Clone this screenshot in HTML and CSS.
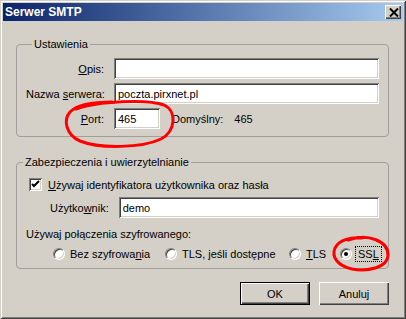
FILE: index.html
```html
<!DOCTYPE html>
<html lang="pl">
<head>
<meta charset="utf-8">
<title>Serwer SMTP</title>
<link rel="stylesheet" href="styles.css">
</head>
<body>
<div class="window">
  <div class="titlebar">
    <span class="title">Serwer SMTP</span>
    <span class="close"><svg width="10" height="9" viewBox="0 0 10 9"><path d="M1 0.5 L9 8.5 M9 0.5 L1 8.5" stroke="#000" stroke-width="2" fill="none"/></svg></span>
  </div>
  <div class="content">
    <fieldset class="group g1">
      <legend>Ustawienia</legend>
      <div class="form-grid">
        <span class="lbl"><u>O</u>pis:</span>
        <span class="input"></span>
        <span class="lbl">Nazwa <u>s</u>erwera:</span>
        <span class="input">poczta.pirxnet.pl</span>
        <span class="lbl"><u>P</u>ort:</span>
        <div class="port-row">
          <span class="input port">465</span>
          <span class="def">Domyślny:</span>
          <span class="defval">465</span>
        </div>
      </div>
    </fieldset>
    <fieldset class="group g2">
      <legend>Zabezpieczenia i uwierzytelnianie</legend>
      <div class="check-row">
        <span class="checkbox"><svg width="9" height="9" viewBox="0 0 9 9"><path d="M1 4 L3 6 L8 1" stroke="#000" stroke-width="2" fill="none"/></svg></span>
        <span><u>U</u>żywaj identyfikatora użytkownika oraz hasła</span>
      </div>
      <div class="user-row">
        <span class="lbl">Użytko<u>w</u>nik:</span>
        <span class="input user">demo</span>
      </div>
      <div class="enc-label">Używaj połączenia szyfrowanego:</div>
      <div class="radios">
        <span class="radio-item r1"><span class="radio"></span><span>Bez szyfrowa<u>n</u>ia</span></span>
        <span class="radio-item r2"><span class="radio"></span><span>TLS, <u>j</u>eśli dostępne</span></span>
        <span class="radio-item r3"><span class="radio"></span><span><u>T</u>LS</span></span>
        <span class="radio-item"><span class="radio checked"></span><span class="focus">SS<u>L</u></span></span>
      </div>
    </fieldset>
    <div class="buttons">
      <span class="btn default">OK</span>
      <span class="btn">Anuluj</span>
    </div>
  </div>
  <svg class="marks" width="406" height="319" viewBox="0 0 406 319">
    <path d="M76 109 C 98 101, 148 99, 164 105 C 177 111, 176 131, 161 139 C 142 148, 100 149, 80 141 C 66 135, 63 120, 70 112 C 78 104, 96 102, 112 102" stroke="#f00" stroke-width="3" fill="none" stroke-linecap="round"/>
    <path d="M348 240 C 368 233, 389 241, 388 256 C 387 267, 369 272, 352 269 C 338 266, 331 257, 335 248 C 339 240, 350 237, 362 238" stroke="#f00" stroke-width="3" fill="none" stroke-linecap="round"/>
  </svg>
</div>
</body>
</html>
```
FILE: styles.css
```css
* { box-sizing: border-box; }
html, body { margin: 0; padding: 0; background: #d4d0c8; }
body {
  font-family: "Liberation Sans", Arial, sans-serif;
  font-size: 11px;
  color: #000;
}
u { text-decoration: underline; text-underline-offset: 1px; }

.window {
  position: relative;
  width: 406px;
  height: 319px;
  padding: 3px;
  background: #d4d0c8;
  box-shadow: inset 1px 1px #d4d0c8, inset -1px -1px #404040, inset 2px 2px #fff, inset -2px -2px #808080;
  display: flex;
  flex-direction: column;
}

.titlebar {
  height: 18px;
  background: linear-gradient(to right, #0a246a, #a6caf0);
  display: flex;
  align-items: center;
  justify-content: space-between;
  padding: 0 2px 0 2px;
}
.title {
  color: #fff;
  font-weight: bold;
  font-size: 12px;
}
.close {
  width: 16px;
  height: 14px;
  background: #d4d0c8;
  box-shadow: inset 1px 1px #fff, inset -1px -1px #404040, inset -2px -2px #808080;
  display: flex;
  align-items: center;
  justify-content: center;
  padding-left: 1px;
}
.close svg { display: block; }

.content {
  padding: 17px 14px 0 13px;
  display: flex;
  flex-direction: column;
}

.group {
  margin: 0;
  border: 1px solid #a09f9a;
  border-radius: 4px;
  padding: 0;
  min-width: 0;
}
.group legend {
  margin-left: 6px;
  padding: 0 2px;
  line-height: 13px;
}
.g1 { padding: 7px 9px 7px 9px; }
.g2 { margin-top: 19px; padding: 8px 9px 7px 0; }

.form-grid {
  display: grid;
  grid-template-columns: 78px 1fr;
  column-gap: 10px;
  row-gap: 4px;
  align-items: center;
}
.lbl { text-align: right; white-space: nowrap; }

.input {
  display: flex;
  align-items: center;
  height: 21px;
  background: #fff;
  padding: 0 4px;
  box-shadow: inset 1px 1px #808080, inset -1px -1px #fff, inset 2px 2px #404040, inset -2px -2px #d4d0c8;
  white-space: nowrap;
}
.port-row { display: flex; align-items: center; }
.input.port { width: 46px; }
.def { margin-left: 12px; }
.defval { margin-left: 11px; }

.check-row {
  display: flex;
  align-items: center;
  height: 15px;
  padding-left: 12px;
  gap: 6px;
}
.checkbox {
  width: 13px;
  height: 13px;
  background: #fff;
  box-shadow: inset 1px 1px #808080, inset -1px -1px #fff, inset 2px 2px #404040, inset -2px -2px #d4d0c8;
  display: flex;
  align-items: center;
  justify-content: center;
}
.checkbox svg { display: block; }

.user-row {
  display: flex;
  align-items: center;
  margin-top: 5px;
  padding-left: 33px;
  gap: 10px;
}
.input.user { flex: 1; }

.enc-label {
  margin-top: 10px;
  padding-left: 9px;
  line-height: 13px;
}

.radios {
  display: flex;
  align-items: center;
  margin-top: 6px;
  padding-left: 36px;
  height: 14px;
}
.radio-item { display: flex; align-items: center; gap: 5px; white-space: nowrap; flex: none; }
.r1 { width: 112px; }
.r2 { width: 124px; }
.r3 { width: 51px; }
.radio {
  width: 12px;
  height: 12px;
  border-radius: 50%;
  background: #fff;
  border: 1px solid;
  border-color: #808080 #fff #fff #808080;
  box-shadow: inset 1px 1px #404040, inset -1px -1px #d4d0c8;
  position: relative;
  flex: none;
}
.radio.checked::after {
  content: "";
  position: absolute;
  left: 3px;
  top: 3px;
  width: 4px;
  height: 4px;
  border-radius: 50%;
  background: #000;
}
.focus { outline: 1px dotted #000; outline-offset: 1px; padding: 0 1px; }

.buttons {
  display: flex;
  justify-content: flex-end;
  gap: 9px;
  margin-top: 13px;
}
.btn {
  width: 70px;
  height: 23px;
  display: flex;
  align-items: center;
  justify-content: center;
  background: #d4d0c8;
  box-shadow: inset 1px 1px #fff, inset -1px -1px #404040, inset -2px -2px #808080;
}
.btn.default {
  box-shadow: inset 0 0 0 1px #000, inset 2px 2px #fff, inset -2px -2px #404040, inset -3px -3px #808080;
}

.marks {
  position: absolute;
  left: 0;
  top: 0;
  pointer-events: none;
}
```
